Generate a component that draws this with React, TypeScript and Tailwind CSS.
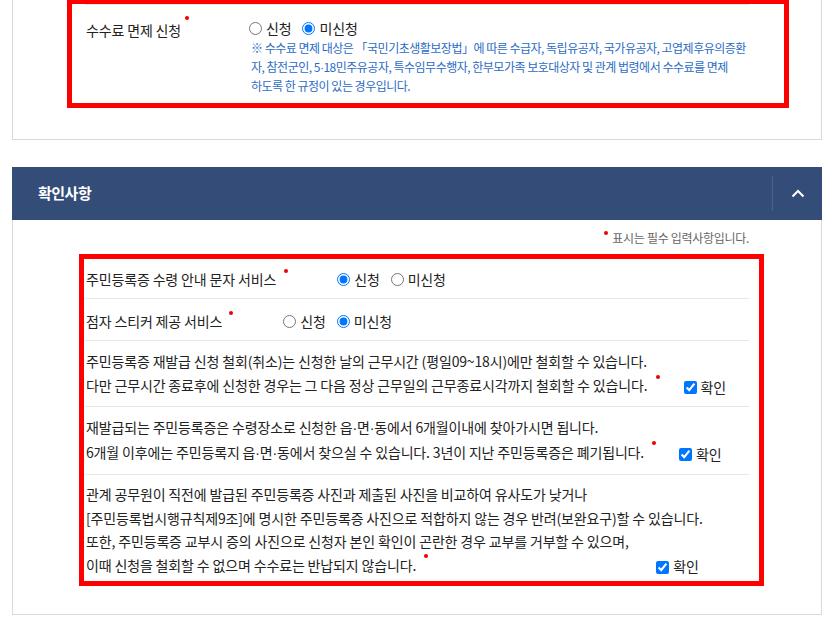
const Dot = ({ className = '' }: { className?: string }) => (
  <span
    className={`relative inline-block h-[4px] w-[4px] rounded-full bg-[#f00000] align-middle ${className}`}
  />
)

// narrow middle dot, like the original page's font
const Md = () => <span className="font-['Liberation_Sans',sans-serif]">·</span>

function Radio({ checked, label, name }: { checked: boolean; label: string; name: string }) {
  return (
    <label className="flex items-center gap-[4px]">
      <input type="radio" name={name} defaultChecked={checked} className="m-0 h-[13px] w-[13px]" />
      <span>{label}</span>
    </label>
  )
}

function Confirm({ className = '' }: { className?: string }) {
  return (
    <label className={`inline-flex items-center gap-[4px] align-middle ${className}`}>
      <input type="checkbox" defaultChecked className="m-0 h-[13px] w-[13px]" />
      <span>확인</span>
    </label>
  )
}

export default function App() {
  return (
    <div className="h-[626px] w-[834px] overflow-hidden bg-white font-['Noto_Sans_CJK_KR','Noto_Sans',sans-serif] text-[14px] tracking-[-0.15px] text-[#222]">
      {/* 수수료 면제 */}
      <div className="mx-3 h-[141px] border-x border-b border-[#d9d9d9]">
        <div className="-mt-px ml-[54px] h-[109px] w-[722px] border-[5px] border-[#ff0000]">
          <div className="ml-[13px] flex w-[664px] border-t border-[#e8e8e8]">
            <div className="w-[164px] shrink-0 pl-px pt-[13px] leading-[24px]">
              수수료 면제 신청
              <Dot className="-top-[14px] ml-[4px]" />
            </div>
            <div className="pt-[12px]">
              <div className="flex h-[22px] items-center gap-[11px]">
                <Radio name="fee" checked={false} label="신청" />
                <Radio name="fee" checked label="미신청" />
              </div>
              <p className="whitespace-nowrap pl-[2px] text-[12px] leading-[18.5px] tracking-[-0.5px] text-[#2b6cc4]">
                ※ 수수료 면제 대상은 「국민기초생활보장법」에 따른 수급자, 독립유공자, 국가유공자, 고엽제후유의증환
                <br />
                자, 참전군인, 5<Md />18민주유공자, 특수임무수행자, 한부모가족 보호대상자 및 관계 법령에서 수수료를 면제
                <br />
                하도록 한 규정이 있는 경우입니다.
              </p>
            </div>
          </div>
        </div>
      </div>

      {/* 확인사항 */}
      <div className="mx-3 mt-[27px] flex h-[53px] items-center bg-[#344d78]">
        <h2 className="pl-[26px] text-[15px] font-bold tracking-[-0.5px] text-white">확인사항</h2>
        <div className="ml-auto flex h-full items-center">
          <div className="h-[35px] w-px bg-[#4d6189]" />
          <div className="flex w-[49px] justify-center">
            <svg width="14" height="9" viewBox="0 0 14 9" fill="none">
              <polyline points="1.5,7.5 7,2 12.5,7.5" stroke="white" strokeWidth="2" />
            </svg>
          </div>
        </div>
      </div>
      <div className="mx-3 h-[395px] border-x border-b border-[#d9d9d9]">
        <div className="flex items-center justify-end pr-[72px] pt-[10px] text-[12px] leading-[16px] tracking-[-0.3px] text-[#666]">
          <Dot className="-top-[5px] mr-[4px]" />
          표시는 필수 입력사항입니다.
        </div>
        <div className="ml-[66px] mt-[8px] w-[685px] border-[5px] border-[#ff0000]">
          <div className="ml-px w-[664px] leading-[24px]">
            <div className="flex items-center border-b border-[#e8e8e8] pb-[7px] pl-px pt-[8px]">
              <span>
                주민등록증 수령 안내 문자 서비스
                <Dot className="-top-[10px] ml-[8px]" />
              </span>
              <div className="ml-[49px] flex items-center gap-[11px]">
                <Radio name="sms" checked label="신청" />
                <Radio name="sms" checked={false} label="미신청" />
              </div>
            </div>
            <div className="flex items-center border-b border-[#e8e8e8] pb-[7px] pl-px pt-[10px]">
              <span>
                점자 스티커 제공 서비스
                <Dot className="-top-[10px] ml-[7px]" />
              </span>
              <div className="ml-[50px] flex items-center gap-[11px]">
                <Radio name="braille" checked={false} label="신청" />
                <Radio name="braille" checked label="미신청" />
              </div>
            </div>
            <p className="whitespace-nowrap border-b border-[#e8e8e8] pb-[7px] pl-px pt-[8px]">
              주민등록증 재발급 신청 철회(취소)는 신청한 날의 근무시간 (평일09~18시)에만 철회할 수 있습니다.
              <br />
              다만 근무시간 종료후에 신청한 경우는 그 다음 정상 근무일의 근무종료시각까지 철회할 수 있습니다.
              <Dot className="-top-[10px] ml-[8px]" />
              <Confirm className="ml-[24px]" />
            </p>
            <p className="whitespace-nowrap border-b border-[#e8e8e8] pb-[8px] pl-px pt-[8px]">
              재발급되는 주민등록증은 수령장소로 신청한 읍<Md />면<Md />동에서 6개월이내에 찾아가시면 됩니다.
              <br />
              6개월 이후에는 주민등록지 읍<Md />면<Md />동에서 찾으실 수 있습니다. 3년이 지난 주민등록증은 폐기됩니다.
              <Dot className="-top-[11px] ml-[8px]" />
              <Confirm className="ml-[23px]" />
            </p>
            <p className="whitespace-nowrap pb-[2px] pl-px pt-[8px] leading-[23.5px]">
              관계 공무원이 직전에 발급된 주민등록증 사진과 제출된 사진을 비교하여 유사도가 낮거나
              <br />
              [주민등록법시행규칙제9조]에 명시한 주민등록증 사진으로 적합하지 않는 경우 반려(보완요구)할 수 있습니다.
              <br />
              또한, 주민등록증 교부시 증의 사진으로 신청자 본인 확인이 곤란한 경우 교부를 거부할 수 있으며,
              <br />
              이때 신청을 철회할 수 없으며 수수료는 반납되지 않습니다.
              <Dot className="-top-[11px] ml-[8px]" />
              <Confirm className="ml-[228px]" />
            </p>
          </div>
        </div>
      </div>
    </div>
  )
}
